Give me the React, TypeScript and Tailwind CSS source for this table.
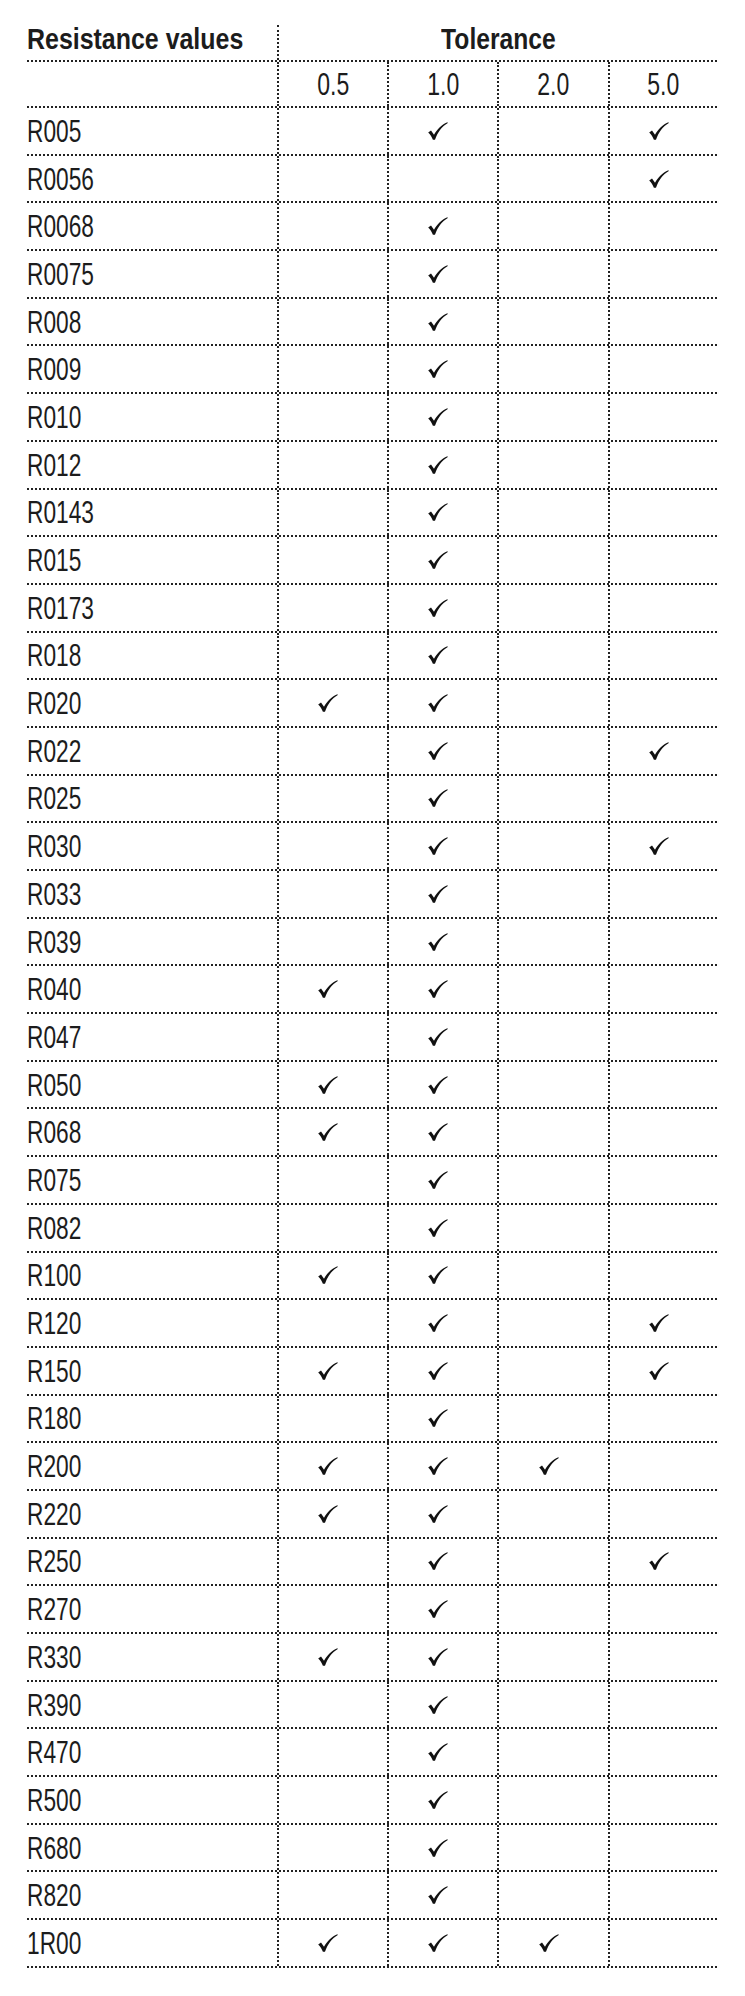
import React from "react";

const COLS = ["0.5", "1.0", "2.0", "5.0"];

const ROWS: [string, number[]][] = [
  ["R005", [1, 3]],
  ["R0056", [3]],
  ["R0068", [1]],
  ["R0075", [1]],
  ["R008", [1]],
  ["R009", [1]],
  ["R010", [1]],
  ["R012", [1]],
  ["R0143", [1]],
  ["R015", [1]],
  ["R0173", [1]],
  ["R018", [1]],
  ["R020", [0, 1]],
  ["R022", [1, 3]],
  ["R025", [1]],
  ["R030", [1, 3]],
  ["R033", [1]],
  ["R039", [1]],
  ["R040", [0, 1]],
  ["R047", [1]],
  ["R050", [0, 1]],
  ["R068", [0, 1]],
  ["R075", [1]],
  ["R082", [1]],
  ["R100", [0, 1]],
  ["R120", [1, 3]],
  ["R150", [0, 1, 3]],
  ["R180", [1]],
  ["R200", [0, 1, 2]],
  ["R220", [0, 1]],
  ["R250", [1, 3]],
  ["R270", [1]],
  ["R330", [0, 1]],
  ["R390", [1]],
  ["R470", [1]],
  ["R500", [1]],
  ["R680", [1]],
  ["R820", [1]],
  ["1R00", [0, 1, 2]],
];

function Check() {
  return (
    <svg width="20" height="18" viewBox="0 0 20 18" className="mr-[10px]">
      <path
        d="M0.2 10.4 L3 8.4 L6 12.8 C9 7.4 13.2 2.8 19.4 0.2 L19.8 0.9 C13.8 4.4 9.8 9.8 7 17.7 L4.9 17.7 C3.8 14.8 2.2 12.2 0.2 10.4 Z"
        fill="#111"
      />
    </svg>
  );
}

export default function App() {
  return (
    <div className="min-h-[1996px] w-[745px] bg-white pt-[25px] font-['Liberation_Sans',Arial,sans-serif] text-[#1c1c1c]">
      <div className="ml-[27px] w-[690px]">
        {/* header row 1 */}
        <div className="grid h-[37px] grid-cols-[250px_440px] border-b-2 border-dotted border-[#222]">
          <div className="whitespace-nowrap leading-none">
            <span className="inline-block origin-left scale-x-[0.86] whitespace-nowrap text-[29px] font-bold leading-none">
              Resistance values
            </span>
          </div>
          <div className="flex justify-center border-l-2 border-dotted border-[#222] leading-none">
            <span className="inline-block origin-center scale-x-[0.85] whitespace-nowrap text-[29px] font-bold leading-none">
              Tolerance
            </span>
          </div>
        </div>
        {/* header row 2 */}
        <div className="grid h-[46px] grid-cols-[250px_110px_110px_111px_109px] border-b-2 border-dotted border-[#222]">
          <div />
          {COLS.map((c) => (
            <div
              key={c}
              className="flex items-center justify-center border-l-2 border-dotted border-[#222]"
            >
              <span className="inline-block origin-center scale-x-[0.72] text-[32px] leading-none">
                {c}
              </span>
            </div>
          ))}
        </div>
        {/* data rows */}
        {ROWS.map(([name, checks]) => (
          <div
            key={name}
            className="grid h-[47.7px] grid-cols-[250px_110px_110px_111px_109px] border-b-2 border-dotted border-[#222]"
          >
            <div className="flex items-center">
              <span className="inline-block origin-left scale-x-[0.71] whitespace-nowrap text-[32px] leading-none">
                {name}
              </span>
            </div>
            {COLS.map((c, i) => (
              <div
                key={c}
                className="flex items-center justify-center border-l-2 border-dotted border-[#222]"
              >
                {checks.includes(i) ? <Check /> : null}
              </div>
            ))}
          </div>
        ))}
      </div>
    </div>
  );
}
